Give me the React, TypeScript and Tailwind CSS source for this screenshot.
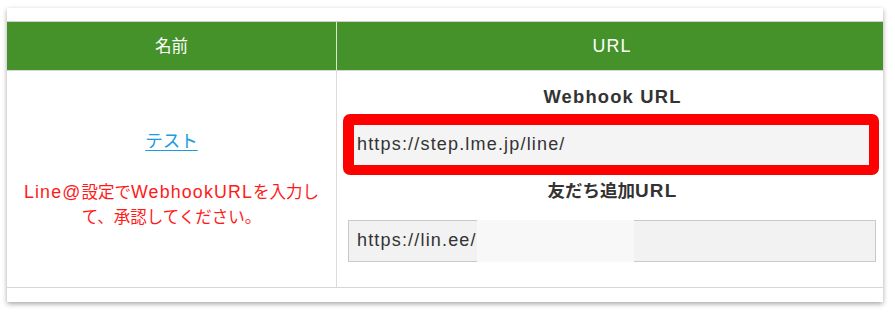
import React from "react";

const L = ({ children }: { children: React.ReactNode }) => (
  <span className="text-[1.08em] tracking-[0.065em]">{children}</span>
);

export default function App() {
  return (
    <div
      className="w-[895px] h-[317px] bg-white pl-[7px] pt-[8px]"
      style={{ fontFamily: '"Liberation Sans", "Noto Sans CJK JP", sans-serif' }}
    >
      <div className="w-[876px] h-[294px] bg-white shadow-[0_2px_5px_rgba(0,0,0,0.35)] pt-[13px] flex flex-col">
        <div className="border-t border-[#cfcfcf] grid grid-cols-[330px_1fr] h-[49px] bg-[#46922a] text-white text-[16.5px]">
          <div className="flex items-center justify-center border-r border-[#d8e6d0]">名前</div>
          <div className="flex items-center justify-center pl-[4px]">
            <L>URL</L>
          </div>
        </div>
        <div className="grid grid-cols-[330px_1fr] h-[218px] border-t border-b border-[#d6d6d6]">
          <div className="flex flex-col items-center justify-center border-r border-[#dcdcdc]">
            <a href="#" className="text-[17.5px] leading-[24px] text-[#1a9be2] underline underline-offset-[3px]">
              テスト
            </a>
            <p className="mt-[27px] text-[16.5px] leading-[25px] text-[#ff1a1a] text-center">
              <L>Line@</L>設定で<L>WebhookURL</L>を入力し
              <br />
              て、承認してください。
            </p>
          </div>
          <div className="flex flex-col pt-[14px]">
            <div className="text-center text-[17px] leading-[24px] font-bold text-[#333] pl-[5px]">
              <L>Webhook URL</L>
            </div>
            <div className="mt-[4px] ml-[6px] mr-[4px] h-[61px] border-[11px] border-r-[10px] border-b-[10px] border-[#ff0000] rounded-[7px] bg-[#f4f4f4] flex items-center pl-[3px]">
              <span className="text-[16.7px] text-[#333]">
                <L>https://step.lme.jp/line/</L>
              </span>
            </div>
            <div className="mt-[4px] text-center text-[17.5px] leading-[24px] font-bold text-[#333] pl-[5px]">
              友だち追加<L>URL</L>
            </div>
            <div className="mt-[17px] ml-[11px] mr-[7px] h-[42px] border border-[#c9c9c9] bg-[#f2f2f2] flex items-stretch pl-[8px]">
              <span className="self-center text-[16.7px] text-[#333]">
                <L>https://lin.ee/</L>
              </span>
              <div className="w-[157px] -my-px bg-[#f8f8f9]" />
            </div>
          </div>
        </div>
      </div>
    </div>
  );
}
